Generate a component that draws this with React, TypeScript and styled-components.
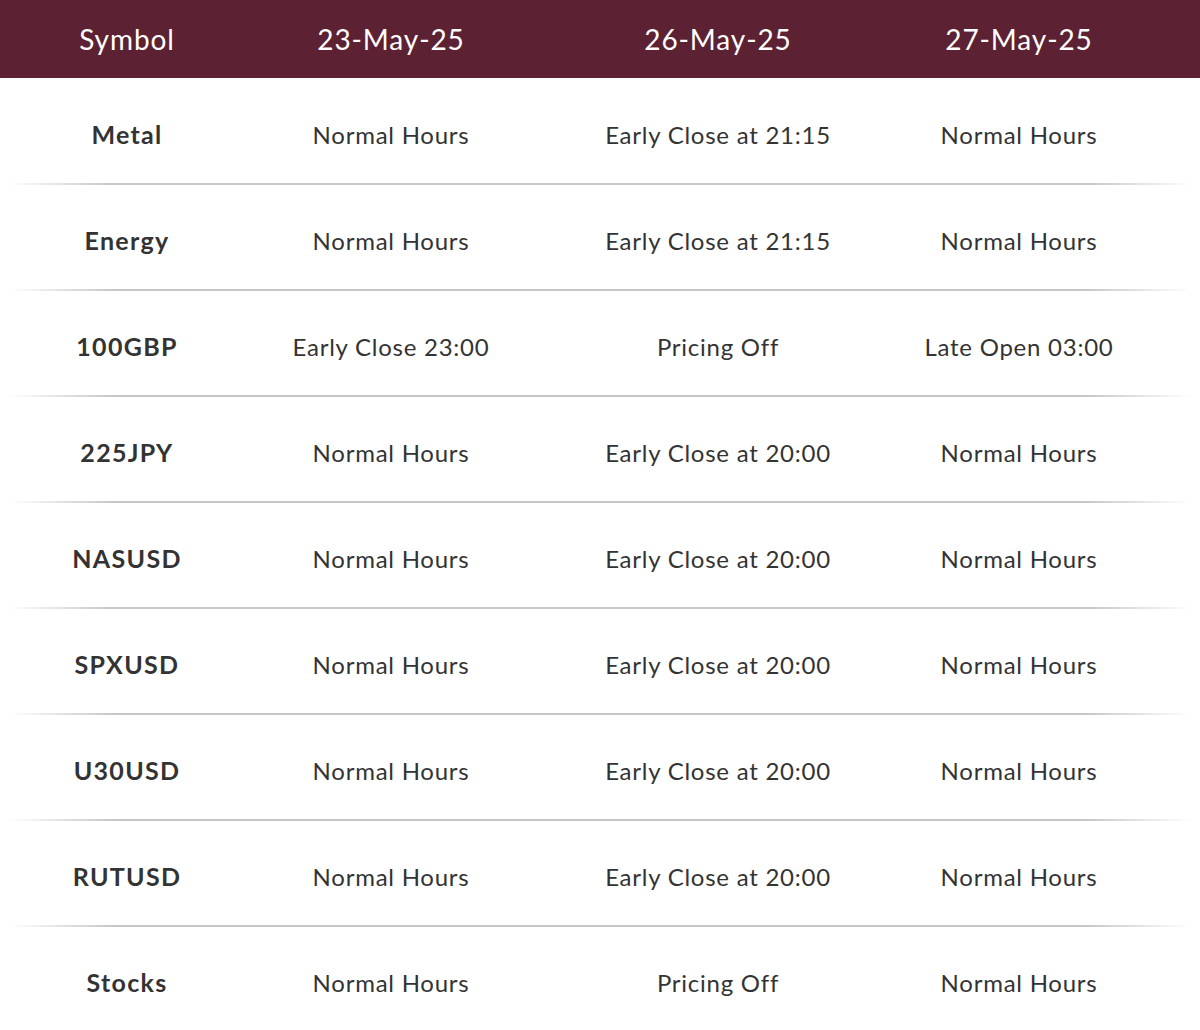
import React from "react";
import styled, { createGlobalStyle } from "styled-components";

const Global = createGlobalStyle`
  html, body { margin: 0; padding: 0; background: #ffffff; }
  body { font-family: "Lato", "Open Sans", sans-serif; }
`;

const Table = styled.div`
  width: 1200px;
  display: flex;
  flex-direction: column;
`;

const cols = "254px 274px 380px 222px 1fr";

const HeaderRow = styled.div`
  display: grid;
  grid-template-columns: ${cols};
  height: 78px;
  align-items: center;
  background: #5c2233;
`;

const HeadCell = styled.div`
  text-align: center;
  color: #ffffff;
  font-size: 28px;
  font-weight: 400;
  letter-spacing: 0.9px;
`;

const Row = styled.div`
  position: relative;
  display: grid;
  grid-template-columns: ${cols};
  height: 106px;
  align-items: center;
  &::after {
    content: "";
    position: absolute;
    left: 8px;
    right: 8px;
    bottom: -1px;
    height: 2px;
    background: linear-gradient(
      to right,
      rgba(196, 196, 196, 0) 0%,
      #c6c6c6 9%,
      #c6c6c6 91%,
      rgba(196, 196, 196, 0) 100%
    );
  }
`;

const Cell = styled.div<{ $bold?: boolean }>`
  text-align: center;
  color: #333333;
  font-size: ${(p) => (p.$bold ? "25px" : "24px")};
  font-weight: ${(p) => (p.$bold ? 700 : 400)};
  letter-spacing: ${(p) => (p.$bold ? "1.3px" : "0.75px")};
  padding-top: 6px;
`;

const headers = ["Symbol", "23-May-25", "26-May-25", "27-May-25"];

const rows: [string, string, string, string][] = [
  ["Metal", "Normal Hours", "Early Close at 21:15", "Normal Hours"],
  ["Energy", "Normal Hours", "Early Close at 21:15", "Normal Hours"],
  ["100GBP", "Early Close 23:00", "Pricing Off", "Late Open 03:00"],
  ["225JPY", "Normal Hours", "Early Close at 20:00", "Normal Hours"],
  ["NASUSD", "Normal Hours", "Early Close at 20:00", "Normal Hours"],
  ["SPXUSD", "Normal Hours", "Early Close at 20:00", "Normal Hours"],
  ["U30USD", "Normal Hours", "Early Close at 20:00", "Normal Hours"],
  ["RUTUSD", "Normal Hours", "Early Close at 20:00", "Normal Hours"],
  ["Stocks", "Normal Hours", "Pricing Off", "Normal Hours"],
];

export default function App() {
  return (
    <>
      <Global />
      <Table>
        <HeaderRow>
          {headers.map((h) => (
            <HeadCell key={h}>{h}</HeadCell>
          ))}
        </HeaderRow>
        {rows.map((r) => (
          <Row key={r[0]}>
            <Cell $bold>{r[0]}</Cell>
            <Cell>{r[1]}</Cell>
            <Cell>{r[2]}</Cell>
            <Cell>{r[3]}</Cell>
          </Row>
        ))}
      </Table>
    </>
  );
}
